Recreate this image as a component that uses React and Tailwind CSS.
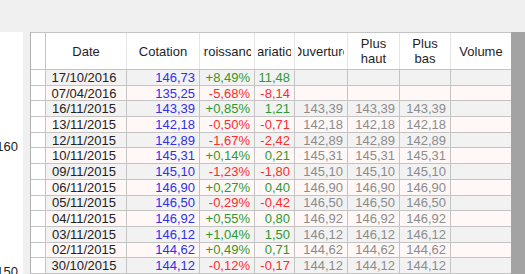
import React from "react";

const cols = [
    { key: "date", label: "Date", w: "w-[81px]", align: "justify-center", color: "text-[#222]" },
    { key: "cot", label: "Cotation", w: "w-[73px]", align: "justify-end", color: "text-[#2f2ff0]" },
    { key: "pct", label: "Croissance", w: "w-[55px]", align: "justify-end", color: "" },
    { key: "var", label: "Variation", w: "w-[40px]", align: "justify-end", color: "" },
    { key: "ouv", label: "Ouverture", w: "w-[53px]", align: "justify-end", color: "text-[#8c8c8c]" },
    { key: "haut", label: "Plus haut", w: "w-[52px]", align: "justify-end", color: "text-[#8c8c8c]" },
    { key: "bas", label: "Plus bas", w: "w-[51px]", align: "justify-end", color: "text-[#8c8c8c]" },
    { key: "vol", label: "Volume", w: "w-[60px]", align: "justify-end", color: "" },
];

const rows = [
    ["17/10/2016", "146,73", "+8,49%", "11,48", "", "", ""],
    ["07/04/2016", "135,25", "-5,68%", "-8,14", "", "", ""],
    ["16/11/2015", "143,39", "+0,85%", "1,21", "143,39", "143,39", "143,39"],
    ["13/11/2015", "142,18", "-0,50%", "-0,71", "142,18", "142,18", "142,18"],
    ["12/11/2015", "142,89", "-1,67%", "-2,42", "142,89", "142,89", "142,89"],
    ["10/11/2015", "145,31", "+0,14%", "0,21", "145,31", "145,31", "145,31"],
    ["09/11/2015", "145,10", "-1,23%", "-1,80", "145,10", "145,10", "145,10"],
    ["06/11/2015", "146,90", "+0,27%", "0,40", "146,90", "146,90", "146,90"],
    ["05/11/2015", "146,50", "-0,29%", "-0,42", "146,50", "146,50", "146,50"],
    ["04/11/2015", "146,92", "+0,55%", "0,80", "146,92", "146,92", "146,92"],
    ["03/11/2015", "146,12", "+1,04%", "1,50", "146,12", "146,12", "146,12"],
    ["02/11/2015", "144,62", "+0,49%", "0,71", "144,62", "144,62", "144,62"],
    ["30/10/2015", "144,12", "-0,12%", "-0,17", "144,12", "144,12", "144,12"],
];

// header labels are centred and clipped inside the cell, like the grid does
const HeaderCell = ({ col, last }) => (
    <div
        className={`${col.w} h-full shrink-0 flex items-stretch ${
            last ? "" : "border-r border-[#e4e4e4]"
        }`}
    >
        <div className="flex-1 mx-[3px] flex items-center justify-center overflow-hidden">
            <span className="text-center leading-[15px] whitespace-pre shrink-0">
                {col.label.startsWith("Plus") ? col.label.replace(" ", "\n") : col.label}
            </span>
        </div>
    </div>
);

const Row = ({ data, idx }) => {
    const bg = idx % 2 === 0 ? "bg-[#f2f2f2]" : "bg-[#fff8f7]";
    const sign = data[2].startsWith("-") ? "text-[#ff2b2b]" : "text-[#2f992f]";

    return (
        <div className="flex h-[16.78px] border-b border-[#c4c4c4]">
            <div className="w-[15px] shrink-0 bg-white border-r border-[#c4c4c4]" />
            {cols.map((col, i) => (
                <div
                    key={col.key}
                    className={`${col.w} shrink-0 flex items-center ${col.align} ${bg} ${
                        i === 2 || i === 3 ? sign : col.color
                    } pr-[4px] leading-none whitespace-nowrap overflow-hidden ${
                        i === cols.length - 1 ? "" : "border-r border-[#c4c4c4]"
                    }`}
                >
                    {data[i] || ""}
                </div>
            ))}
        </div>
    );
};

export default function App() {
    return (
        <div className="w-[525px] h-[274px] overflow-hidden bg-[#f0f0f0] text-[13px] font-['Liberation_Sans',Arial,sans-serif]">
            <div className="h-[32px]" />

            <div className="flex h-[242px]">
                {/* chart axis */}
                <div className="relative w-[23px] bg-white overflow-hidden text-[#222]">
                    <span className="absolute right-[5px] top-[107px] leading-[15px]">160</span>
                    <span className="absolute right-[5px] top-[232px] leading-[15px]">150</span>
                </div>
                <div className="w-[7px]" />

                <div className="flex flex-1 border-l border-[#b0b0b0] overflow-hidden">
                    <div className="w-[480px] shrink-0 flex flex-col bg-white">
                        <div className="flex h-[38px] shrink-0 border-t border-b border-[#c4c4c4] text-[#1e1e1e]">
                            <div className="w-[15px] shrink-0 border-r border-[#c4c4c4]" />
                            {cols.map((col, i) => (
                                <HeaderCell key={col.key} col={col} last={i === cols.length - 1} />
                            ))}
                        </div>
                        {rows.map((r, i) => (
                            <Row key={r[0]} data={r} idx={i} />
                        ))}
                    </div>
                    <div className="flex-1 bg-[#a3a3a3]" />
                </div>
            </div>
        </div>
    );
}
